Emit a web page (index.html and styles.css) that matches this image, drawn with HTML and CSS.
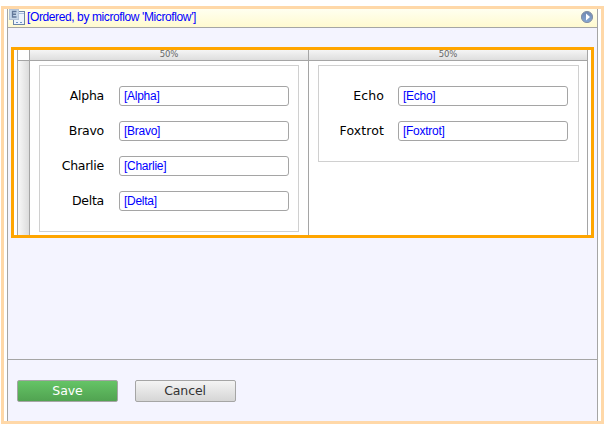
FILE: index.html
```
<!DOCTYPE html>
<html lang="en">
<head>
<meta charset="utf-8">
<title>Form</title>
<link rel="stylesheet" href="styles.css">
</head>
<body>
<div class="frame">
  <div class="view">
    <header class="source">
      <svg class="entity" width="16" height="16" viewBox="0 0 16 16">
        <rect x="4.500" y="2.500" width="11" height="13" fill="#edf4fc" stroke="#6b84a8"/>
        <path d="M9 4.500h6" stroke="#a8bfdf"/>
        <path d="M7 13.500h2M11 13.500h2" stroke="#6f94c8"/>
        <rect x=".5" y=".5" width="9" height="10" fill="#c6d7ea" stroke="#b4c3d8"/>
        <path d="M7.500 2.500H3.500v5.500H7.500M4 5.250h3" fill="none" stroke="#62789a" stroke-width="1.300"/>
      </svg>
      <span class="source-name">[Ordered, by microflow 'Microflow']</span>
      <svg class="go" width="13" height="13" viewBox="0 0 13 13">
        <defs><linearGradient id="g" x2="0" y2="1"><stop stop-color="#6f87b0"/><stop offset="1" stop-color="#86a8d4"/></linearGradient></defs>
        <circle cx="6" cy="7" r="5.600" fill="url(#g)" stroke="#8791a3"/>
        <path d="M5 3.500v7l4-3.500z" fill="#fff"/>
      </svg>
    </header>
    <main class="content">
      <section class="table">
        <div class="grid">
          <div class="corner"></div>
          <div class="col-head">50%</div>
          <div class="col-head">50%</div>
          <div class="row-head"></div>
          <div class="cell">
            <div class="group">
              <div class="field"><label>Alpha</label><div class="input"><span>[Alpha]</span></div></div>
              <div class="field"><label>Bravo</label><div class="input"><span>[Bravo]</span></div></div>
              <div class="field"><label>Charlie</label><div class="input"><span>[Charlie]</span></div></div>
              <div class="field"><label>Delta</label><div class="input"><span>[Delta]</span></div></div>
            </div>
          </div>
          <div class="cell">
            <div class="group">
              <div class="field"><label>Echo</label><div class="input"><span>[Echo]</span></div></div>
              <div class="field"><label>Foxtrot</label><div class="input"><span>[Foxtrot]</span></div></div>
            </div>
          </div>
        </div>
      </section>
    </main>
    <footer class="actions">
      <button class="btn save">Save</button>
      <button class="btn">Cancel</button>
    </footer>
  </div>
</div>
</body>
</html>
```
FILE: styles.css
```
* { box-sizing: border-box; }
body {
  margin: 0;
  padding: 6px 0 0 1px;
  background: #fff;
  font-family: "DejaVu Sans", sans-serif;
}
.frame {
  width: 603px;
  height: 418px;
  border: 3px solid #ffd8a8;
  padding: 0 3px;
}
.view {
  display: flex;
  flex-direction: column;
  height: 412px;
  border: solid #a5a5a5;
  border-width: 0 1px;
  background: #f4f4ff;
}
.source {
  display: flex;
  height: 19px;
  padding: 0 3px 0 1px;
  border-bottom: 1px solid #a5a5a5;
  background: linear-gradient(#fffff0, #fffad0);
}
.entity { flex: none; }
.source-name {
  margin-left: 2px;
  font: 12px/16px "Liberation Sans", sans-serif;
  letter-spacing: -0.39px;
  color: #00f;
  white-space: nowrap;
}
.go { margin: 1px 0 0 auto; }
.content {
  height: 331px;
  padding: 19px 3px 0;
}
.table {
  height: 191px;
  border: 3px solid #ffa500;
  padding: 0 3px;
  background: #fff;
}
.grid {
  display: grid;
  grid-template-columns: 13px 279px 279px;
  grid-template-rows: 11px 174px;
}
.corner, .col-head, .row-head, .cell { border-right: 1px solid #a5a5a5; }
.corner, .row-head { border-left: 1px solid #a5a5a5; }
.corner, .col-head { border-bottom: 1px solid #a5a5a5; }
.col-head {
  background: linear-gradient(#f5f5f5, #dedede);
  color: #666;
  font-size: 8.5px;
  line-height: 9px;
  letter-spacing: -0.1px;
  text-align: center;
}
.row-head { background: linear-gradient(90deg, #f8f8f8, #dcdcdc); }
.cell { padding: 4px 9px 0; }
.group {
  display: flex;
  flex-direction: column;
  gap: 15px;
  border: 1px solid #d0d0d0;
  padding: 20px 9px;
}
.cell:last-child .group { margin-right: -1px; padding-right: 10px; }
.field {
  display: grid;
  grid-template-columns: 56px 170px;
  column-gap: 14px;
  height: 20px;
}
.field label {
  padding-right: 1px;
  font-size: 12.5px;
  line-height: 19px;
  letter-spacing: -0.25px;
  text-align: right;
  color: #000;
}
.cell:last-child .field label {
  padding-right: 0;
  letter-spacing: 0.1px;
}
.input {
  border: 1px solid #a5a5a5;
  border-radius: 3px;
  padding-left: 4px;
  background: #fff;
  font: 12px/18px "Liberation Sans", sans-serif;
  letter-spacing: -0.27px;
  color: #00f;
}
.actions {
  display: flex;
  gap: 17px;
  height: 62px;
  border-top: 1px solid #a5a5a5;
  padding: 20px 9px;
}
.btn {
  width: 101px;
  height: 22px;
  border: 1px solid #a5a5a5;
  border-radius: 2px;
  padding: 0 1px 1px 0;
  background: linear-gradient(#f4f4f4, #d6d6d6);
  color: #333;
  font: 12.5px/19px "DejaVu Sans", sans-serif;
  letter-spacing: -0.1px;
}
.save {
  padding-right: 0;
  background: linear-gradient(#65c466, #51a351);
  color: #fff;
}
```
